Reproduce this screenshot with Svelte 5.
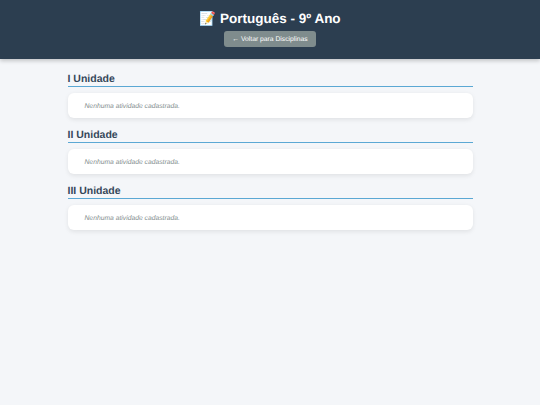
<script>
  const units = ['I Unidade', 'II Unidade', 'III Unidade'];
</script>

<header class="top">
  <h1><span class="emoji">📝</span> Português - 9º Ano</h1>
  <a class="back" href="#top">← Voltar para Disciplinas</a>
</header>
<main class="content">
  {#each units as unit}
    <section>
      <h2>{unit}</h2>
      <div class="card"><p>Nenhuma atividade cadastrada.</p></div>
    </section>
  {/each}
</main>

<style>
  :global(body) {
    margin: 0;
    background: #f4f6f9;
    font-family: "Liberation Sans", Arial, sans-serif;
    text-rendering: geometricPrecision;
    min-height: 405px;
  }
  .top {
    height: 59px;
    box-sizing: border-box;
    background: #2c3e50;
    box-shadow: 0 1.5px 4px rgba(0, 0, 0, 0.2);
    padding-top: 10px;
    display: flex;
    flex-direction: column;
    align-items: center;
    color: #fff;
  }
  h1 {
    margin: 0;
    font-size: 13.5px;
    line-height: 17px;
    font-weight: 700;
  }
  .back {
    margin-top: 4px;
    background: #7f8c8d;
    color: #fff;
    text-decoration: none;
    font-size: 6.75px;
    line-height: 15px;
    padding: 1px 8px 0;
    border-radius: 3px;
  }
  .content {
    width: 405px;
    margin: 0 auto;
    padding-top: 12px;
  }
  section { margin-bottom: 10px; }
  h2 {
    margin: 0 0 6px;
    font-size: 10.5px;
    line-height: 14px;
    font-weight: 700;
    color: #34475a;
    border-bottom: 1px solid #5ba8d4;
    padding-top: 1px;
  }
  .card {
    height: 25px;
    margin-bottom: -1px;
    background: #fff;
    border-radius: 6px;
    box-shadow: 0 1.5px 4px rgba(0, 0, 0, 0.08);
    display: flex;
    align-items: center;
    padding-left: 17px;
  }
  p {
    margin: 0;
    padding-top: 1px;
    font-size: 6.75px;
    font-style: italic;
    color: #7f8c8d;
  }
</style>
